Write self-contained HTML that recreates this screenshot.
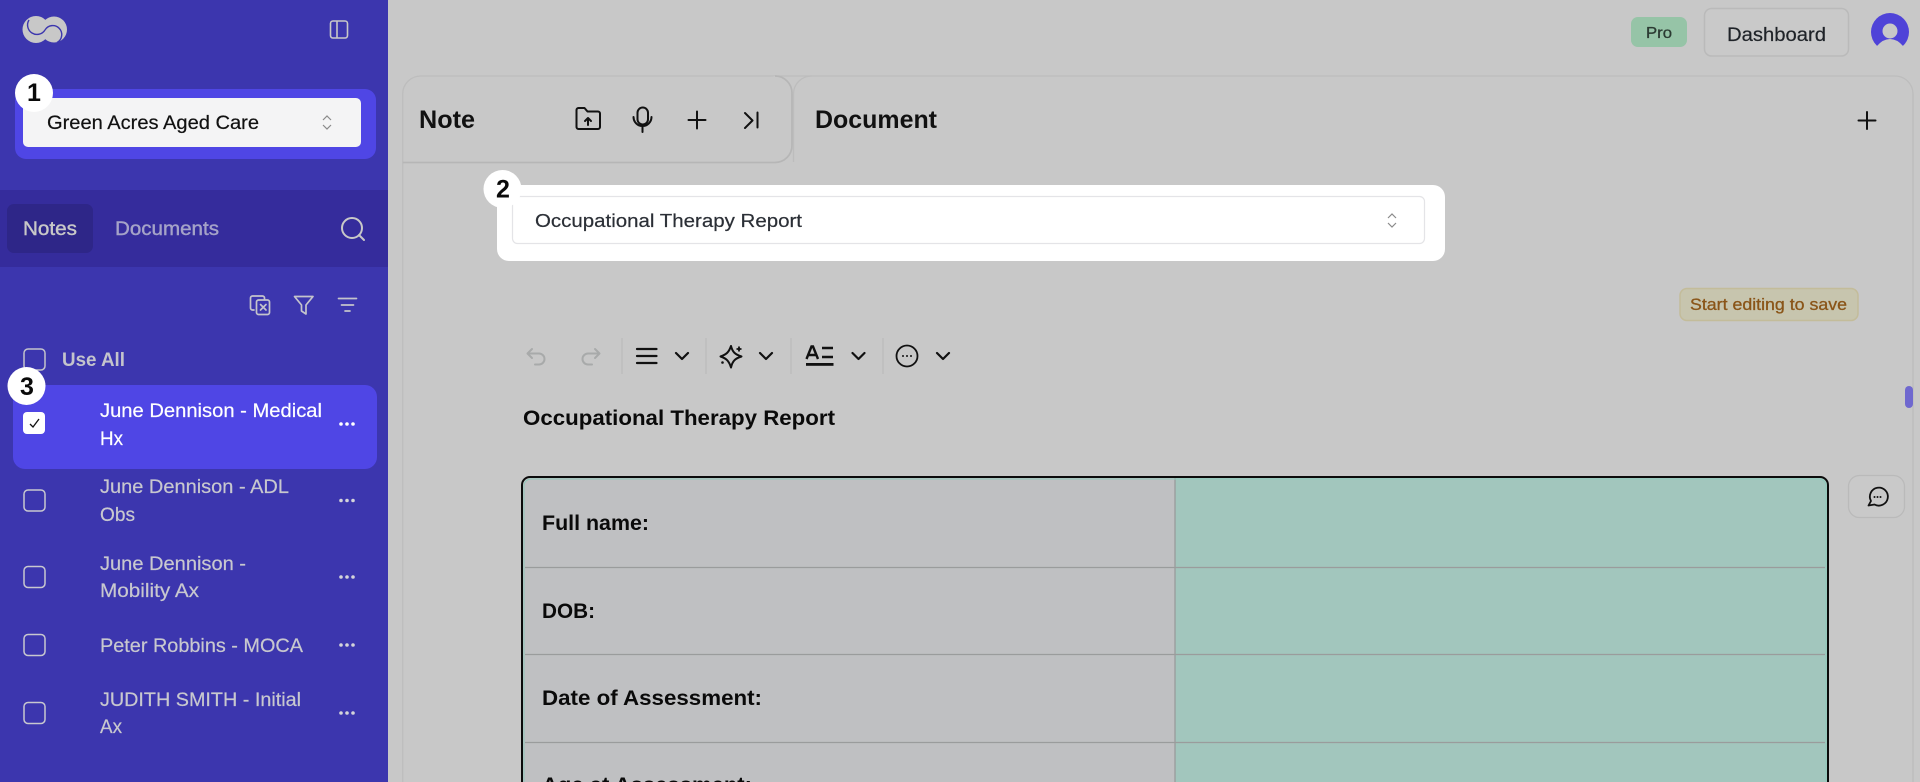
<!DOCTYPE html>
<html lang="en"><head><meta charset="utf-8"><title>Occupational Therapy Report</title>
<style>
html,body{margin:0;padding:0;width:1920px;height:782px;overflow:hidden;background:#c8c8c8}
svg{display:block;font-family:"Liberation Sans",sans-serif}
</style></head><body>
<svg width="1920" height="782" viewBox="0 0 1920 782" xmlns="http://www.w3.org/2000/svg">
<rect width="1920" height="782" fill="#c8c8c8"/>
<!-- sidebar -->
<rect width="388" height="782" fill="#3c36ae"/>
<rect x="0" y="190" width="388" height="77" fill="#352c9c"/>
<rect x="7" y="204" width="86" height="49" rx="7" fill="#2e2688"/>
<!-- logo -->
<circle cx="36" cy="29.500" r="13.500" fill="#c8c8c8"/><circle cx="54" cy="29.500" r="13" fill="#c8c8c8"/>
<path d="M29 20A8.500 8.500 0 0 0 45 30" fill="none" stroke="#3c36ae" stroke-width="1.400"/>
<path d="M45 30A9 9 0 1 1 57 42.500" fill="none" stroke="#3c36ae" stroke-width="1.400"/>
<!-- toggle -->
<rect x="330.500" y="21" width="17" height="17" rx="2.500" fill="none" stroke="#c8c8c8" stroke-width="1.600"/>
<path d="M337 21v17" stroke="#c8c8c8" stroke-width="1.600"/>
<!-- org select -->
<rect x="15" y="89" width="361" height="70" rx="11" fill="#4f46e5"/>
<rect x="23" y="98" width="338" height="49" rx="5" fill="#f4f4f5"/>
<text x="47" y="129" font-size="19" fill="#111" stroke="#111" stroke-width=".2" textLength="212" lengthAdjust="spacingAndGlyphs">Green Acres Aged Care</text>
<path d="M323 120l4-4 4 4M323 125l4 4 4-4" fill="none" stroke="#8a8a8a" stroke-width="1.200"/>
<!-- tabs -->
<text x="23" y="235" font-size="19" fill="#c8c8c8" stroke="#c8c8c8" stroke-width=".4" textLength="54" lengthAdjust="spacingAndGlyphs">Notes</text>
<text x="115" y="235" font-size="19" fill="#a5a3c8" stroke="#a5a3c8" stroke-width=".4" textLength="104" lengthAdjust="spacingAndGlyphs">Documents</text>
<circle cx="352" cy="228" r="10" fill="none" stroke="#c8c8c8" stroke-width="2"/>
<path d="M359 235l5 5" stroke="#c8c8c8" stroke-width="2" stroke-linecap="round"/>
<!-- tool icons -->
<g fill="none" stroke="#c4c4cc" stroke-width="1.700" stroke-linecap="round" stroke-linejoin="round">
<path d="M254 310h-1.500a2 2 0 0 1-2-2v-10a2 2 0 0 1 2-2h10a2 2 0 0 1 2 2v1.500"/>
<rect x="256.500" y="300" width="13" height="14.500" rx="2"/>
<path d="M260.500 304.500l5.500 5.500M266 304.500l-5.500 5.500"/>
<path d="M294.500 296.500h18.500l-7 8.500v9l-4.500-3v-6z"/>
<path d="M338.500 298.500h18M341.500 305h12M345 311h5"/>
</g>
<!-- use all -->
<rect x="24" y="349" width="21" height="21" rx="4" fill="none" stroke="#c4c4cc" stroke-width="1.500"/>
<text x="62" y="366" font-size="19" font-weight="700" fill="#c4c4cc" textLength="63" lengthAdjust="spacingAndGlyphs">Use All</text>
<!-- list -->
<rect x="13" y="385" width="364" height="84" rx="12" fill="#4f46e5"/>
<rect x="23" y="412" width="22" height="22" rx="4" fill="#fff"/>
<path d="M30 424l3 3 6-8" fill="none" stroke="#111" stroke-width="1.300"/>
<text x="100" y="417" font-size="19" fill="#fff" stroke="#fff" stroke-width=".2" textLength="222" lengthAdjust="spacingAndGlyphs">June Dennison - Medical</text>
<text x="100" y="445" font-size="19" fill="#fff" stroke="#fff" stroke-width=".2" textLength="23" lengthAdjust="spacingAndGlyphs">Hx</text>
<g fill="#fff"><circle cx="341" cy="424" r="1.800"/><circle cx="347" cy="424" r="1.800"/><circle cx="353" cy="424" r="1.800"/></g>
<g fill="none" stroke="#c8c8cf" stroke-width="1.500">
<rect x="24" y="490" width="21" height="21" rx="4"/>
<rect x="24" y="566.500" width="21" height="21" rx="4"/>
<rect x="24" y="634.500" width="21" height="21" rx="4"/>
<rect x="24" y="702.500" width="21" height="21" rx="4"/>
</g>
<g font-size="19" fill="#c8c8cf" stroke="#c8c8cf" stroke-width=".2">
<text x="100" y="493" textLength="189" lengthAdjust="spacingAndGlyphs">June Dennison - ADL</text>
<text x="100" y="521" textLength="35" lengthAdjust="spacingAndGlyphs">Obs</text>
<text x="100" y="570" textLength="146" lengthAdjust="spacingAndGlyphs">June Dennison -</text>
<text x="100" y="597" textLength="99" lengthAdjust="spacingAndGlyphs">Mobility Ax</text>
<text x="100" y="652" textLength="203" lengthAdjust="spacingAndGlyphs">Peter Robbins - MOCA</text>
<text x="100" y="706" textLength="201" lengthAdjust="spacingAndGlyphs">JUDITH SMITH - Initial</text>
<text x="100" y="733" textLength="22" lengthAdjust="spacingAndGlyphs">Ax</text>
</g>
<g fill="#d4d4da">
<circle cx="341" cy="500.500" r="1.800"/><circle cx="347" cy="500.500" r="1.800"/><circle cx="353" cy="500.500" r="1.800"/>
<circle cx="341" cy="577" r="1.800"/><circle cx="347" cy="577" r="1.800"/><circle cx="353" cy="577" r="1.800"/>
<circle cx="341" cy="645" r="1.800"/><circle cx="347" cy="645" r="1.800"/><circle cx="353" cy="645" r="1.800"/>
<circle cx="341" cy="713" r="1.800"/><circle cx="347" cy="713" r="1.800"/><circle cx="353" cy="713" r="1.800"/>
</g>
<!-- top right -->
<rect x="1631" y="17" width="56" height="30" rx="7" fill="#96c4a7"/>
<text x="1646" y="38" font-size="16" fill="#2b3a32" stroke="#2b3a32" stroke-width=".3" textLength="26" lengthAdjust="spacingAndGlyphs">Pro</text>
<rect x="1704.500" y="8.500" width="144" height="47.500" rx="7" fill="#c9c9c9" stroke="#bababa" stroke-width="1.500"/>
<text x="1727" y="41" font-size="19" fill="#1f2328" stroke="#1f2328" stroke-width=".2" textLength="99" lengthAdjust="spacingAndGlyphs">Dashboard</text>
<circle cx="1890" cy="32" r="19" fill="#4f43d8"/>
<circle cx="1890" cy="31" r="7.500" fill="#c8c8c8"/>
<path d="M1868 52v-6h9q6-7 13-7t13 7h9v6z" fill="#c8c8c8"/>
<!-- panels -->
<path d="M402.700 782V94a18 18 0 0 1 18-18H1895a18 18 0 0 1 18 18V782" fill="none" stroke="#bdbdbd" stroke-width="1.300"/>
<path d="M402.700 162.500H775a17 17 0 0 0 17-17V93a17 17 0 0 0-17-17" fill="#c8c8c8" stroke="#b6b6b6" stroke-width="1.700"/>
<path d="M793.500 162V94a18 18 0 0 1 18-18" fill="none" stroke="#bdbdbd" stroke-width="1.300"/>
<text x="419" y="128" font-size="25" font-weight="700" fill="#111" textLength="56" lengthAdjust="spacingAndGlyphs">Note</text>
<text x="815" y="128" font-size="25" font-weight="700" fill="#111" textLength="122" lengthAdjust="spacingAndGlyphs">Document</text>
<g fill="none" stroke="#111" stroke-width="2" stroke-linecap="round" stroke-linejoin="round">
<path d="M576.500 110a2 2 0 0 1 2-2h6l3 3.500h10.500a2 2 0 0 1 2 2V127a2 2 0 0 1-2 2h-19.500a2 2 0 0 1-2-2z"/>
<path d="M588 125v-7M585 121l3-3 3 3"/>
<rect x="637.500" y="107.500" width="10.500" height="17" rx="5.200"/>
<path d="M633.500 117a9 9 0 0 0 18 0M642.500 126v6"/>
<path d="M697 111.500v17M688.500 120h17"/>
<path d="M745 113l7.500 7.500-7.500 7.500M757.500 112.500v15"/>
<path d="M1867 112v17M1858.500 120.500h17"/>
</g>
<!-- template select -->
<rect x="497" y="185" width="948" height="76" rx="12" fill="#fff"/>
<rect x="512.500" y="196.500" width="912" height="47" rx="5" fill="#fff" stroke="#e4e4e7" stroke-width="1.200"/>
<text x="535" y="227" font-size="18.500" fill="#2b2f36" stroke="#2b2f36" stroke-width=".2" textLength="267" lengthAdjust="spacingAndGlyphs">Occupational Therapy Report</text>
<path d="M1388 218l4-4 4 4M1388 223l4 4 4-4" fill="none" stroke="#8a8a8a" stroke-width="1.200"/>
<!-- save -->
<rect x="1680" y="288.500" width="178" height="32" rx="7" fill="#c7c5ae" stroke="#c3bc9a" stroke-width="1.500"/>
<text x="1690" y="310" font-size="16.500" fill="#8a5518" stroke="#8a5518" stroke-width=".3" textLength="157" lengthAdjust="spacingAndGlyphs">Start editing to save</text>
<!-- toolbar -->
<g fill="none" stroke="#a8aaaa" stroke-width="2" stroke-linecap="round" stroke-linejoin="round">
<path d="M532 349l-4.500 4.500 4.500 4.500M528 353.500h11a5.500 5.500 0 0 1 0 11h-4"/>
<path d="M595 349l4.500 4.500-4.500 4.500M599 353.500h-11a5.500 5.500 0 0 0 0 11h4"/>
</g>
<g fill="#c0c0c0"><rect x="621" y="338" width="2" height="36"/><rect x="705" y="338" width="2" height="36"/><rect x="790" y="338" width="2" height="36"/><rect x="882" y="338" width="2" height="36"/></g>
<g fill="none" stroke="#111" stroke-width="2.200" stroke-linecap="round" stroke-linejoin="round">
<path d="M637 349h19.500M637 356h19.500M637 363h19.500"/>
<path d="M676 353l6 6 6-6M760 353l6 6 6-6M852.500 353l6 6 6-6M937 353l6 6 6-6"/>
<path d="M731 346C732.500 352 735 354.500 741.500 356.500C735 358.500 732.500 361 731 367.500C729 361 726.500 358.500 720.500 356.500C726.500 354.500 729 352 731 346z" stroke-width="2"/>
<circle cx="907" cy="356" r="10.500" stroke-width="1.800"/>
</g>
<path d="M739 346.500v5M736.500 349h5" stroke="#111" stroke-width="1.800"/>
<circle cx="722.500" cy="362.500" r="1.300" fill="#111"/>
<g fill="#111"><circle cx="903" cy="356" r="1"/><circle cx="907" cy="356" r="1"/><circle cx="911" cy="356" r="1"/></g>
<path d="M806.500 359l5-12.500h1.500l5 12.500M808.500 355h8" fill="none" stroke="#111" stroke-width="2.400"/>
<path d="M822 348h11M822 357h11" stroke="#111" stroke-width="2.400"/>
<rect x="806" y="363" width="27.500" height="2.800" fill="#111"/>
<!-- title -->
<text x="523" y="425" font-size="21" font-weight="700" fill="#0a0a0a" textLength="312" lengthAdjust="spacingAndGlyphs">Occupational Therapy Report</text>
<!-- table -->
<path d="M530 477H1820a8 8 0 0 1 8 8V782H522V485a8 8 0 0 1 8-8z" fill="#bfc0c2"/>
<path d="M1175 477H1820a8 8 0 0 1 8 8V782H1175z" fill="#a2c6bd"/>
<path d="M525 567.500H1825M525 654.500H1825M525 742.500H1825" stroke="#9a9c9c" stroke-width="1.300"/>
<path d="M1175 478V782" stroke="#9a9c9c" stroke-width="1.300"/>
<path d="M524 782V486a7 7 0 0 1 7-7H1819a7 7 0 0 1 7 7V782" fill="none" stroke="#8fc9bb" stroke-width="1"/>
<path d="M522 782V485a8 8 0 0 1 8-8H1820a8 8 0 0 1 8 8V782" fill="none" stroke="#0b0b0b" stroke-width="2"/>
<g font-size="21" font-weight="700" fill="#0a0a0a">
<text x="542" y="530" textLength="107" lengthAdjust="spacingAndGlyphs">Full name:</text>
<text x="542" y="618" textLength="53" lengthAdjust="spacingAndGlyphs">DOB:</text>
<text x="542" y="705" textLength="220" lengthAdjust="spacingAndGlyphs">Date of Assessment:</text>
<text x="542" y="792" textLength="210" lengthAdjust="spacingAndGlyphs">Age at Assessment:</text>
</g>
<!-- comment -->
<rect x="1848.500" y="475.500" width="56" height="42" rx="11" fill="#c9c9c9" stroke="#bababa" stroke-width="1.300"/>
<path d="M1868.500 505.500l2.500-4.500a9 9 0 1 1 3.500 3.500z" fill="none" stroke="#111" stroke-width="1.800" stroke-linejoin="round"/>
<g fill="#111"><circle cx="1874.500" cy="497" r="1"/><circle cx="1877.500" cy="497" r="1"/><circle cx="1880.500" cy="497" r="1"/></g>
<!-- scroll thumb -->
<rect x="1905" y="386" width="8" height="22" rx="4" fill="#6f68cf"/>
<!-- badges -->
<g fill="#fff"><circle cx="34" cy="93" r="19"/><circle cx="502.500" cy="189" r="19"/><circle cx="26.500" cy="386" r="19"/></g>
<g font-size="25" font-weight="700" fill="#0a0a0a" text-anchor="middle">
<text x="34" y="101">1</text><text x="503" y="197.500">2</text><text x="27" y="395">3</text>
</g>
</svg>
</body></html>
